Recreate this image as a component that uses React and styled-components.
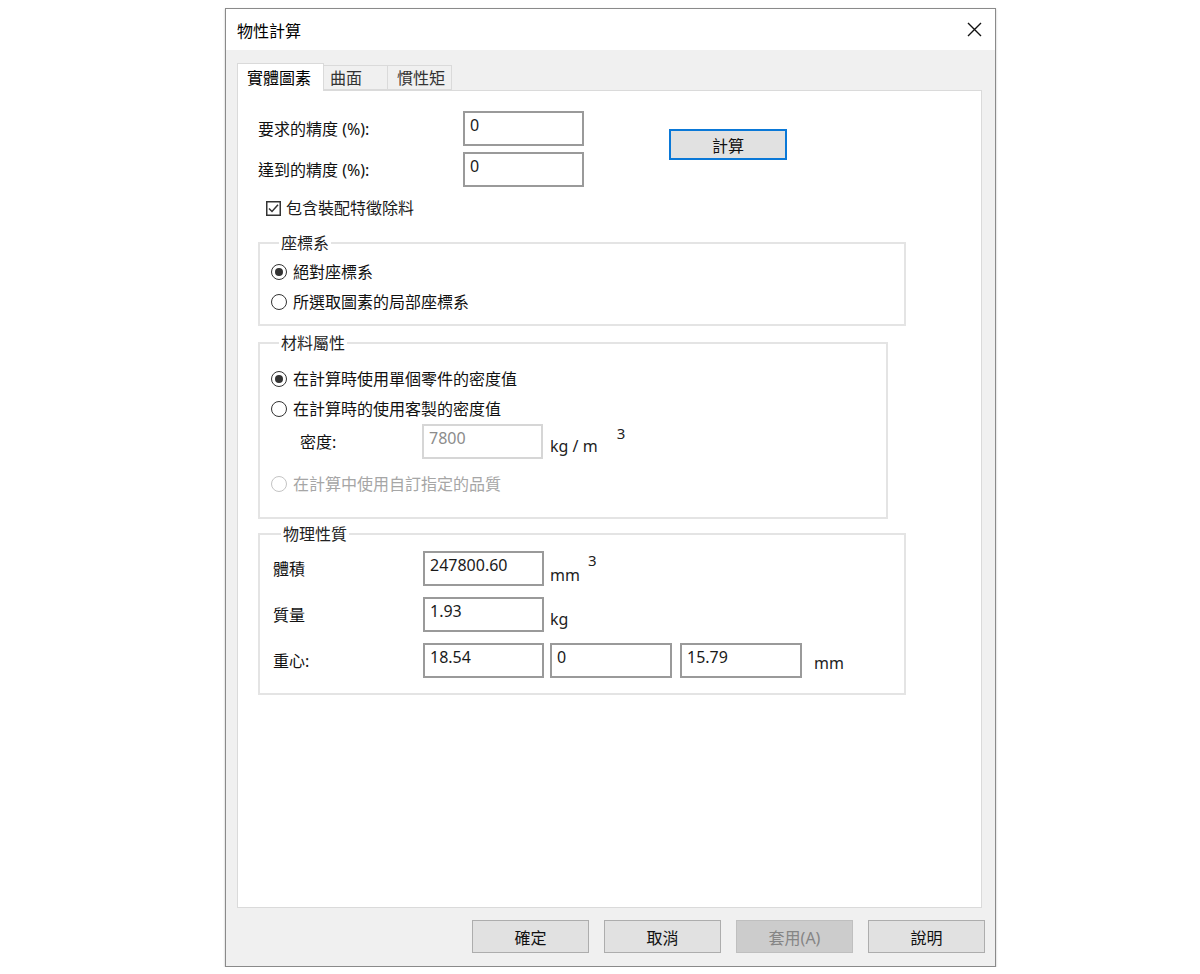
import React from 'react';
import styled, { createGlobalStyle } from 'styled-components';

const GlobalStyle = createGlobalStyle`
  body {
    margin: 0;
    background: #ffffff;
    font-family: "Noto Sans", "Noto Sans CJK TC", sans-serif;
    color: #1a1a1a;
  }
  * { box-sizing: border-box; }
`;

const Dialog = styled.div`
  margin: 8px 0 0 225px;
  width: 771px;
  height: 959px;
  border: 1px solid #8a8a8a;
  box-shadow: 0 1px 2px rgba(0, 0, 0, 0.25);
  display: flex;
  flex-direction: column;
  font-size: 16px;
`;

const TitleBar = styled.div`
  height: 41px;
  background: #fff;
  display: flex;
  align-items: center;
  justify-content: space-between;
  padding: 0 13px 0 11px;
  font-size: 16px;
  color: #000;
`;

const Body = styled.div`
  flex: 1;
  background: #f0f0f0;
  display: flex;
  flex-direction: column;
  padding: 13px 13px 13px 11px;
`;

const TabBar = styled.div`
  display: flex;
  align-items: flex-end;
  height: 27px;
`;

const Tab = styled.div`
  width: ${p => p.$w}px;
  height: ${p => (p.$active ? 28 : 25)}px;
  padding-left: ${p => p.$pl}px;
  display: flex;
  align-items: center;
  background: ${p => (p.$active ? '#fff' : '#f0f0f0')};
  border: 1px solid #dadada;
  border-bottom: ${p => (p.$active ? 'none' : '1px solid #dadada')};
  border-left: ${p => (p.$first ? '1px solid #dadada' : 'none')};
  margin-bottom: ${p => (p.$active ? '-1px' : '0')};
  position: relative;
  z-index: ${p => (p.$active ? 2 : 1)};
  color: ${p => (p.$active ? '#000' : '#333')};
  line-height: 20px;
`;

const Panel = styled.div`
  flex: 1;
  background: #fff;
  border: 1px solid #dadada;
  padding: 20px 0 0 20px;
`;

const TopRow = styled.div`
  display: flex;
  align-items: flex-start;
`;

const FormGrid = styled.div`
  display: grid;
  grid-template-columns: 205px 121px;
  row-gap: 6px;
  align-items: center;
`;

const Label = styled.span`
  line-height: 20px;
  color: #111;
  width: ${p => (p.$w ? `${p.$w}px` : 'auto')};
  flex-shrink: 0;
`;

const Field = styled.input`
  width: ${p => p.$w || 121}px;
  height: 35px;
  border: 2px solid ${p => (p.disabled ? '#d6d6d6' : '#9a9a9a')};
  background: #fff;
  padding: 0 5px 7px;
  font-family: "Noto Sans", "Noto Sans CJK TC", sans-serif;
  font-size: 16px;
  color: ${p => (p.disabled ? '#8c8c8c' : '#1a1a1a')};
  outline: none;
  margin: 0 0 0 ${p => p.$ml || 0}px;
  flex-shrink: 0;
`;

const CalcButton = styled.button`
  margin: 18px 0 0 85px;
  width: 118px;
  height: 31px;
  background: #e1e1e1;
  border: 2px solid #0a78d7;
  font-family: "Noto Sans", "Noto Sans CJK TC", sans-serif;
  font-size: 16px;
  color: #111;
  padding: 0;
`;

const CheckRow = styled.label`
  display: flex;
  align-items: center;
  gap: 5px;
  height: 20px;
  margin: 11px 0 0 8px;
  line-height: 20px;
`;

const Group = styled.fieldset`
  width: ${p => p.$w}px;
  margin: ${p => p.$mt}px 0 0 0;
  padding: ${p => p.$pt}px 0 ${p => p.$pb}px ${p => p.$pl}px;
  border: 2px solid #e4e4e4;
  min-inline-size: 0;
`;

const Legend = styled.legend`
  margin-left: 8px;
  padding: 0 2px;
  line-height: 20px;
  color: #222;
`;

const RadioRow = styled.div`
  display: flex;
  align-items: center;
  gap: 6px;
  height: 30px;
  margin-top: ${p => p.$mt || 0}px;
  color: ${p => (p.$disabled ? '#a6a6a6' : '#111')};
  line-height: 20px;
`;

const RadioDot = styled.span`
  width: 16px;
  height: 16px;
  border-radius: 50%;
  border: 1.5px solid ${p => (p.$disabled ? '#c4c4c4' : '#333')};
  display: flex;
  align-items: center;
  justify-content: center;
  flex-shrink: 0;
  &::after {
    content: '';
    width: 8px;
    height: 8px;
    border-radius: 50%;
    background: ${p => (p.$checked ? '#333' : 'transparent')};
  }
`;

const FieldRow = styled.div`
  display: flex;
  align-items: center;
  height: 35px;
  margin-top: ${p => p.$mt || 0}px;
  padding-left: ${p => p.$indent || 0}px;
`;

const Unit = styled.div`
  align-self: stretch;
  display: flex;
  margin-left: ${p => p.$ml}px;
`;

const UnitText = styled.span`
  align-self: flex-end;
  margin-bottom: ${p => p.$mb}px;
  line-height: 20px;
  color: #222;
`;

const Sup = styled.span`
  align-self: flex-start;
  margin-left: ${p => p.$ml}px;
  font-size: 15px;
  line-height: 18px;
  color: #222;
`;

const Footer = styled.div`
  display: flex;
  justify-content: flex-end;
  gap: 15px;
  padding: 12px 0 0 0;
  margin-right: -3px;
`;

const DialogButton = styled.button`
  width: 117px;
  height: 33px;
  background: ${p => (p.disabled ? '#cccccc' : '#e1e1e1')};
  border: 1px solid ${p => (p.disabled ? '#bfbfbf' : '#adadad')};
  font-family: "Noto Sans", "Noto Sans CJK TC", sans-serif;
  font-size: 16px;
  color: ${p => (p.disabled ? '#858585' : '#111')};
  padding: 0;
`;

const CloseIcon = () => (
  <svg width="15" height="15" viewBox="0 0 15 15">
    <path d="M1 1 L14 14 M14 1 L1 14" stroke="#111" strokeWidth="1.4" fill="none" />
  </svg>
);

const CheckBox = () => (
  <svg width="15" height="15" viewBox="0 0 15 15">
    <rect x="0.75" y="0.75" width="13.5" height="13.5" fill="#fff" stroke="#333" strokeWidth="1.5" />
    <path d="M3 7.5 L6 10.5 L12 3.8" stroke="#333" strokeWidth="1.5" fill="none" />
  </svg>
);

const Radio = ({ checked, disabled, children, mt }) => (
  <RadioRow $disabled={disabled} $mt={mt}>
    <RadioDot $checked={checked} $disabled={disabled} />
    {children}
  </RadioRow>
);

export default function App() {
  return (
    <>
      <GlobalStyle />
      <Dialog>
        <TitleBar>
          <span>物性計算</span>
          <CloseIcon />
        </TitleBar>
        <Body>
          <TabBar>
            <Tab $active $first $w={87} $pl={9}>實體圖素</Tab>
            <Tab $w={64} $pl={6}>曲面</Tab>
            <Tab $w={64} $pl={9}>慣性矩</Tab>
          </TabBar>
          <Panel>
            <TopRow>
              <FormGrid>
                <Label>要求的精度 (%):</Label>
                <Field readOnly value="0" />
                <Label>達到的精度 (%):</Label>
                <Field readOnly value="0" />
              </FormGrid>
              <CalcButton>計算</CalcButton>
            </TopRow>
            <CheckRow>
              <CheckBox />
              包含裝配特徵除料
            </CheckRow>

            <Group $w={648} $mt={15} $pt={4} $pb={7} $pl={11}>
              <Legend>座標系</Legend>
              <Radio checked>絕對座標系</Radio>
              <Radio>所選取圖素的局部座標系</Radio>
            </Group>

            <Group $w={630} $mt={7} $pt={11} $pb={18} $pl={11}>
              <Legend>材料屬性</Legend>
              <Radio checked>在計算時使用單個零件的密度值</Radio>
              <Radio>在計算時的使用客製的密度值</Radio>
              <FieldRow $indent={29}>
                <Label $w={122}>密度:</Label>
                <Field disabled value="7800" readOnly />
                <Unit $ml={7}>
                  <UnitText $mb={3}>kg / m</UnitText>
                  <Sup $ml={19}>3</Sup>
                </Unit>
              </FieldRow>
              <Radio disabled mt={10}>在計算中使用自訂指定的品質</Radio>
            </Group>

            <Group $w={648} $mt={5} $pt={7} $pb={15} $pl={13}>
              <Legend>物理性質</Legend>
              <FieldRow>
                <Label $w={150}>體積</Label>
                <Field readOnly value="247800.60" />
                <Unit $ml={6}>
                  <UnitText $mb={1}>mm</UnitText>
                  <Sup $ml={8}>3</Sup>
                </Unit>
              </FieldRow>
              <FieldRow $mt={11}>
                <Label $w={150}>質量</Label>
                <Field readOnly value="1.93" />
                <Unit $ml={6}>
                  <UnitText $mb={3}>kg</UnitText>
                </Unit>
              </FieldRow>
              <FieldRow $mt={11}>
                <Label $w={150}>重心:</Label>
                <Field readOnly value="18.54" />
                <Field readOnly value="0" $w={122} $ml={6} />
                <Field readOnly value="15.79" $w={122} $ml={8} />
                <Unit $ml={12}>
                  <UnitText $mb={5}>mm</UnitText>
                </Unit>
              </FieldRow>
            </Group>
          </Panel>
          <Footer>
            <DialogButton>確定</DialogButton>
            <DialogButton>取消</DialogButton>
            <DialogButton disabled>套用(A)</DialogButton>
            <DialogButton>說明</DialogButton>
          </Footer>
        </Body>
      </Dialog>
    </>
  );
}
